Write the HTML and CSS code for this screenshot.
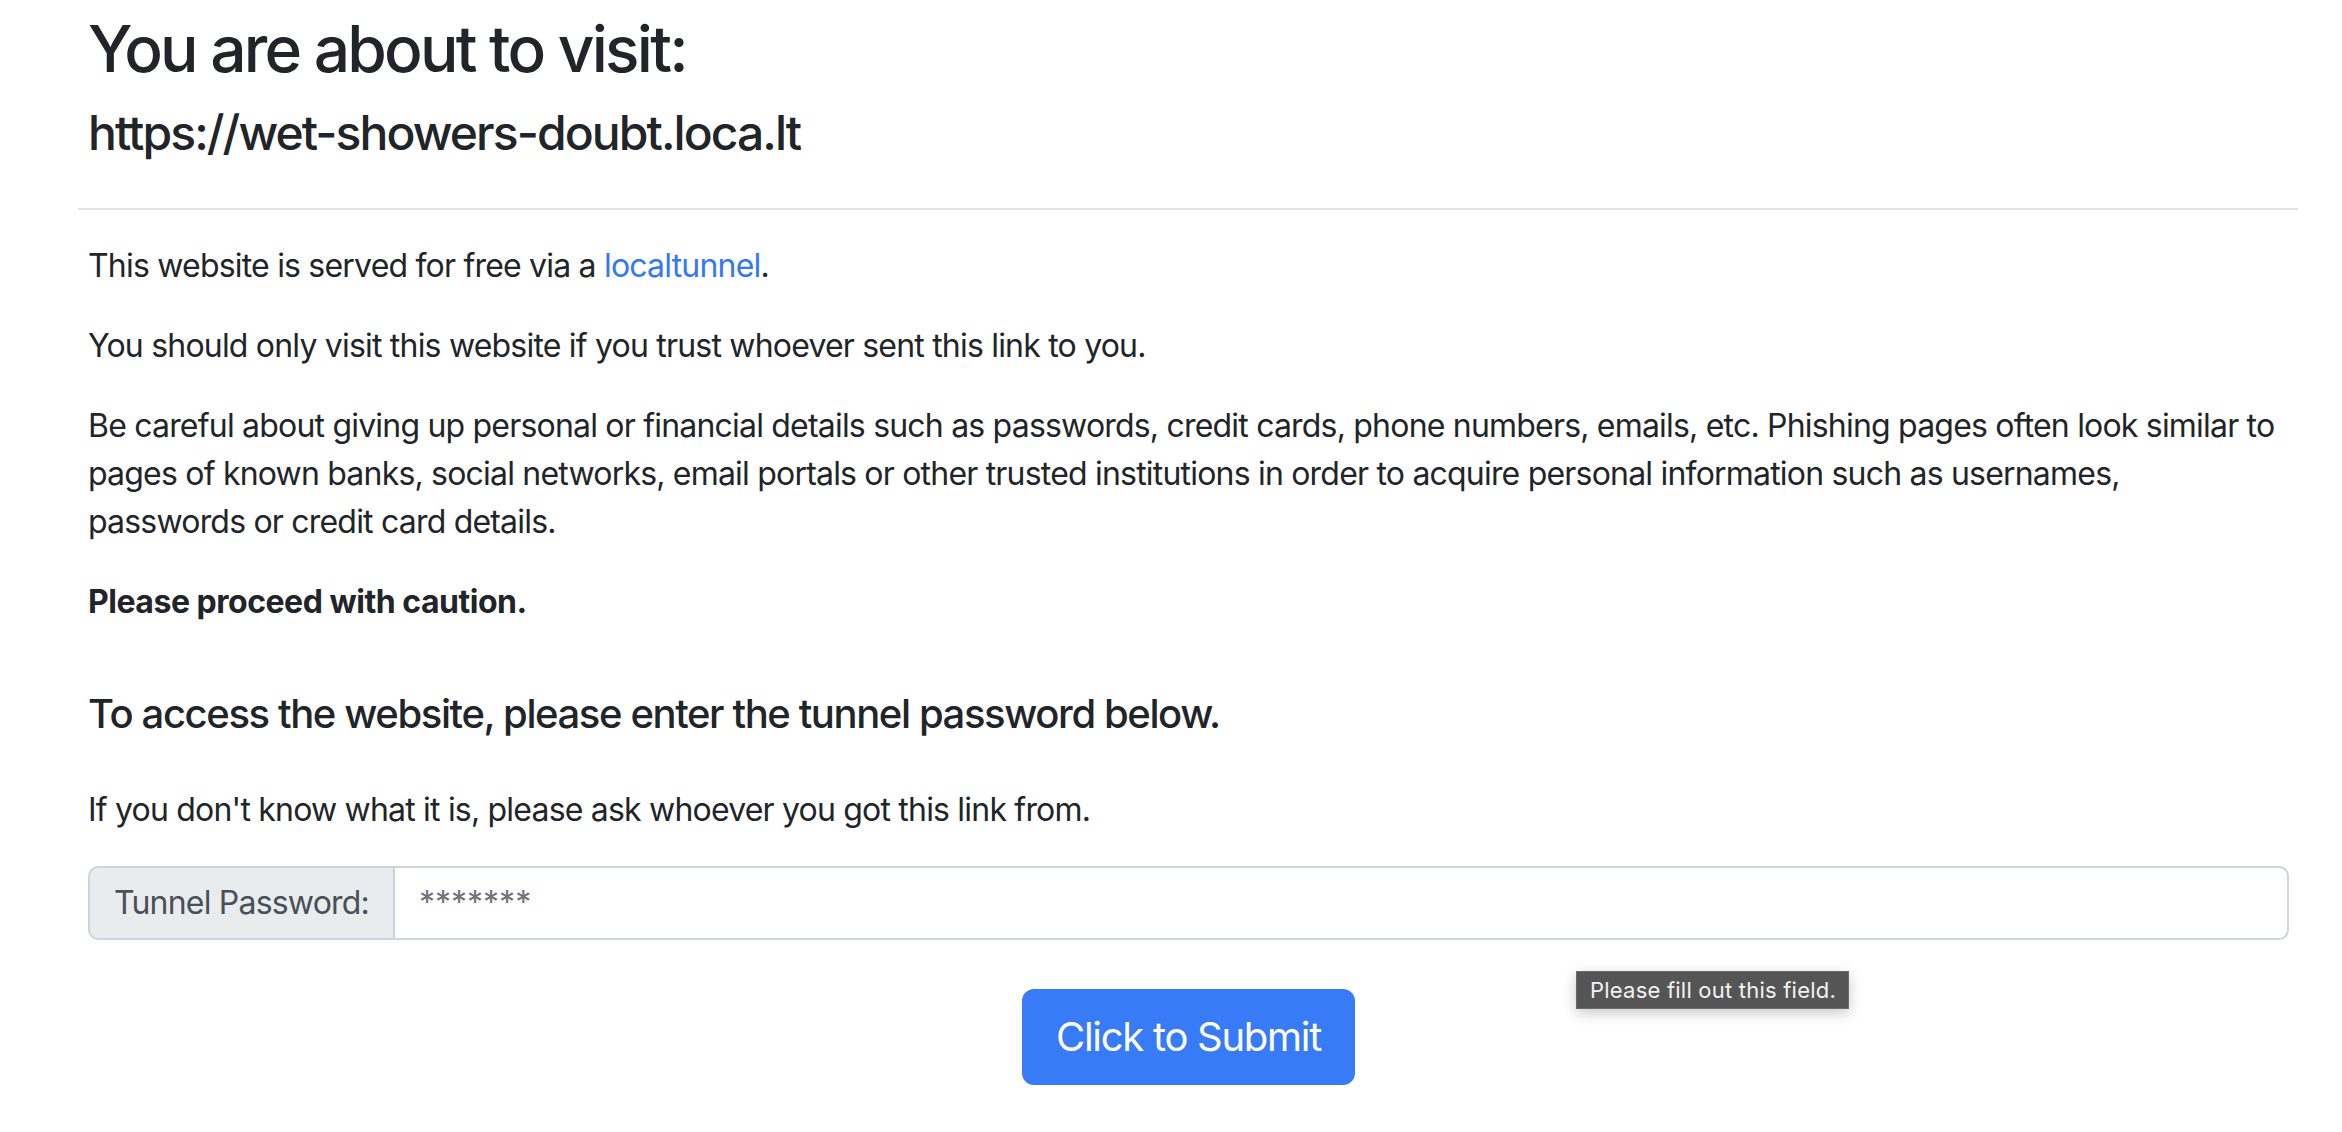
FILE: index.html
```html
<!DOCTYPE html>
<html lang="en">
<head>
<meta charset="utf-8">
<title>localtunnel</title>
<link rel="stylesheet" href="styles.css">
</head>
<body>
<main class="page">
  <h1 class="title">You are about to visit:</h1>
  <h2 class="url">https://wet-showers-doubt.loca.lt</h2>
  <hr class="divider">
  <p class="text">This website is served for free via a <a class="link" href="#">localtunnel</a>.</p>
  <p class="text">You should only visit this website if you trust whoever sent this link to you.</p>
  <p class="text text-long">Be careful about giving up personal or financial details such as passwords, credit cards, phone numbers, emails, etc. Phishing pages often look similar to pages of known banks, social networks, email portals or other trusted institutions in order to acquire personal information such as usernames, passwords or credit card details.</p>
  <p class="text"><strong>Please proceed with caution.</strong></p>
  <h3 class="prompt">To access the website, please enter the tunnel password below.</h3>
  <p class="text">If you don't know what it is, please ask whoever you got this link from.</p>
  <form class="form">
    <div class="input-group">
      <span class="input-label">Tunnel Password:</span>
      <input class="input" type="text" placeholder="*******">
      <div class="tooltip">Please fill out this field.</div>
    </div>
    <div class="actions">
      <button class="btn" type="button">Click to Submit</button>
    </div>
  </form>
</main>
</body>
</html>
```

FILE: styles.css
```css
* { box-sizing: border-box; }

html, body {
  margin: 0;
  background: #ffffff;
}

body {
  font-family: Inter, "Noto Sans", "Liberation Sans", sans-serif;
  color: #212529;
  font-size: 32px;
  line-height: 1.5;
  letter-spacing: -0.025em;
}

.page {
  padding: 11px 53px 40px 88px;
}

.title {
  margin: 0 0 16px;
  font-size: 64px;
  font-weight: 500;
  line-height: 1.2;
  letter-spacing: -0.043em;
}

.url {
  margin: 0 0 16px;
  font-size: 48px;
  font-weight: 500;
  line-height: 1.2;
  letter-spacing: -0.04em;
}

.divider {
  margin: 47px -9px 32px -10px;
  border: 0;
  border-top: 2px solid #e2e3e4;
  height: 0;
}

.text {
  margin: 0 0 32px;
}

.text-long {
  padding-right: 9px;
}

.text strong {
  font-weight: 700;
  letter-spacing: -0.015em;
}

.link {
  color: #3478f6;
  text-decoration: none;
}

.prompt {
  margin: 64px 0 48px;
  font-size: 40px;
  font-weight: 500;
  line-height: 1.2;
  letter-spacing: -0.035em;
}

.form {
  margin: 0;
}

.input-group {
  position: relative;
  display: flex;
  align-items: stretch;
}

.input-label {
  display: flex;
  align-items: center;
  padding: 11px 24px;
  background: #e9ecef;
  color: #495057;
  border: 2px solid #ced4da;
  border-radius: 10px 0 0 10px;
  white-space: nowrap;
  font-size: 32px;
  line-height: 48px;
}

.input {
  flex: 1;
  min-width: 0;
  margin-left: -2px;
  padding: 11px 24px;
  border: 2px solid #ced4da;
  border-radius: 0 10px 10px 0;
  font-family: inherit;
  font-size: 32px;
  line-height: 48px;
  color: #212529;
  background: #ffffff;
  outline: none;
}

.input::placeholder {
  color: #6c757d;
}

.tooltip {
  position: absolute;
  left: 1488px;
  top: calc(100% + 31px);
  padding: 3px 12px 3px 13px;
  background: #555555;
  border: 1px solid #6b6b6b;
  color: #f2f2f2;
  font-size: 22px;
  line-height: 30px;
  letter-spacing: 0.01em;
  white-space: nowrap;
  box-shadow: 0 4px 14px rgba(0, 0, 0, 0.22);
}

.actions {
  display: flex;
  justify-content: center;
  margin-top: 49px;
}

.btn {
  padding: 16px 32px;
  border: 2px solid #387bf6;
  border-radius: 12px;
  background: #387bf6;
  color: #ffffff;
  font-family: inherit;
  font-size: 40px;
  line-height: 60px;
  letter-spacing: -0.032em;
  cursor: pointer;
}
```
